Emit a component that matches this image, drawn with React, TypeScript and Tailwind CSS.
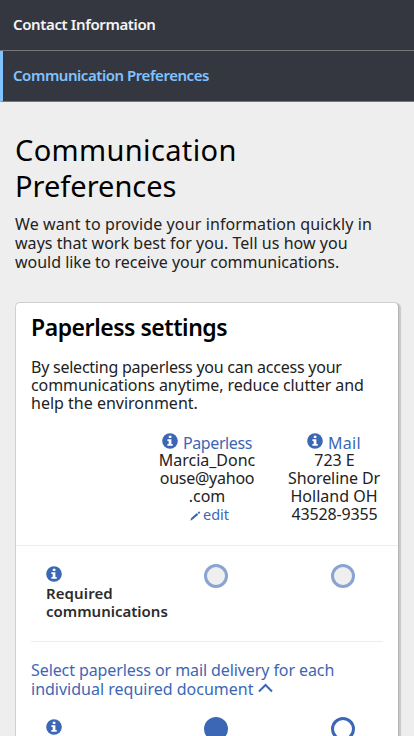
import type { ReactNode } from "react";

function Line({ children, className = "" }: { children: ReactNode; className?: string }) {
  return <span className={`block whitespace-nowrap ${className}`}>{children}</span>;
}

function InfoIcon({ className = "" }: { className?: string }) {
  return (
    <svg viewBox="0 0 16 16" className={`size-4 shrink-0 ${className}`} aria-hidden="true">
      <circle cx="8" cy="8" r="7.8" fill="#3b67b5" />
      <path d="M6.8 2.7h2.6v2.2H6.8zM5.4 6.3h4v4.6h1.3v1.8H5.4v-1.8h1.3V8.1H5.4z" fill="#fff" />
    </svg>
  );
}

function PencilIcon() {
  return (
    <svg viewBox="0 0 11 11" className="mt-0.5 size-[11px]" aria-hidden="true">
      <path d="M.3 10.7l.9-2.7 5.7-4.9 1.4 1.6-5.7 4.9zM7.6 2.5l1-.9q.4-.3.7 0l.7.8q.3.4 0 .7l-1 .9z" fill="#3b67b5" />
    </svg>
  );
}

function Radio({ className }: { className: string }) {
  return <span className={`block size-6 rounded-full border-[3px] ${className}`} />;
}

export default function App() {
  return (
    <div className="h-[736px] w-[414px] overflow-hidden bg-[#eeeeee] font-['Noto_Sans','Open_Sans',sans-serif] text-base text-[#222]">
      <nav className="text-[15px] font-semibold">
        <a className="flex h-[51px] items-center border-b border-[#77777a] bg-[#343740] pb-0.5 pl-[13px] text-[#f4f4f4]">
          <Line className="tracking-[-0.37px]">Contact Information</Line>
        </a>
        <a className="flex h-[51px] items-center border-b border-l-[3px] border-b-[#77777a] border-l-[#80c3ff] bg-[#343740] pb-0.5 pl-[10px] text-[#80c3ff]">
          <Line className="tracking-[-0.45px]">Communication Preferences</Line>
        </a>
      </nav>
      <main className="px-[15px] pt-[30px]">
        <h1 className="text-[29px] leading-[36px] text-black">
          <Line className="tracking-[0.36px]">Communication</Line>
          <Line>Preferences</Line>
        </h1>
        <p className="mt-[11px] leading-[19px]">
          <Line className="tracking-[0.11px]">We want to provide your information quickly in</Line>
          <Line className="tracking-[0.04px]">ways that work best for you. Tell us how you</Line>
          <Line className="tracking-[-0.02px]">would like to receive your communications.</Line>
        </p>
        <section className="mt-[30px] h-[460px] w-[384px] rounded-[5px] border border-[#d0d0d0] border-r-[#b4b4b4] bg-white shadow-[2px_1px_1px_#c8c8c8]">
          <div className="px-[15px] pt-2">
            <h2 className="text-[23px] leading-8 font-semibold text-black">
              <Line className="tracking-[-0.46px]">Paperless settings</Line>
            </h2>
            <p className="mt-[15px] leading-[18px]">
              <Line className="tracking-[-0.24px]">By selecting paperless you can access your</Line>
              <Line className="tracking-[-0.08px]">communications anytime, reduce clutter and</Line>
              <Line>help the environment.</Line>
            </p>
          </div>
          <div className="mt-[21px] flex h-[113px] border-b border-[#ececec] text-center leading-[18px]">
            <div className="ml-[127px] flex w-[128px] flex-col items-center">
              <div className="flex items-center gap-[5px] text-[#3b67b5]"><InfoIcon className="-mt-[3px]" /><Line className="relative top-px tracking-[-0.4px]">Paperless</Line></div>
              <Line>Marcia_Donc</Line>
              <Line className="tracking-[-0.25px]">ouse@yahoo</Line>
              <Line>.com</Line>
              <div className="flex items-center gap-0.5 pl-[5px] text-[14.5px] text-[#3b67b5]"><PencilIcon /><Line>edit</Line></div>
            </div>
            <div className="ml-px flex w-[124px] flex-col items-center">
              <div className="flex items-center gap-[5px] text-[#3b67b5]"><InfoIcon className="-mt-[3px]" /><Line className="relative top-px tracking-[0.3px]">Mail</Line></div>
              <Line className="pl-px">723 E</Line>
              <Line className="tracking-[-0.1px]">Shoreline Dr</Line>
              <Line>Holland OH</Line>
              <Line className="pl-px tracking-[-0.15px]">43528-9355</Line>
            </div>
          </div>
          <div className="mx-[15px] flex h-[96px] border-b border-[#ececec] pt-[18px]">
            <div className="w-[173px] pt-0.5 pl-[15px]">
              <InfoIcon />
              <p className="mt-[2px] text-[15px] leading-[18px] font-semibold text-[#2c2c2c]">
                <Line className="tracking-[0.1px]">Required</Line>
                <Line>communications</Line>
              </p>
            </div>
            <Radio className="border-[#89a4d3] bg-[#efefef]" />
            <Radio className="ml-[103px] border-[#89a4d3] bg-[#efefef]" />
          </div>
          <div className="mx-[15px] mt-[19px] leading-[19px] text-[#3b67b5]">
            <Line className="tracking-[-0.09px]">Select paperless or mail delivery for each</Line>
            <div className="flex items-center gap-[5px]">
              <Line>individual required document</Line>
              <svg viewBox="0 0 15 10" className="-mt-1 h-[10px] w-[15px]" fill="none" stroke="#3b67b5" strokeWidth="2"><path d="M1 8.5L7.5 2 14 8.5" /></svg>
            </div>
          </div>
          <div className="mx-[15px] mt-[18px] flex">
            <div className="w-[173px] pt-0.5 pl-[15px]"><InfoIcon /></div>
            <Radio className="border-[#3b67b5] bg-[#3b67b5]" />
            <Radio className="ml-[103px] border-[#3b67b5] bg-white" />
          </div>
        </section>
      </main>
    </div>
  );
}
